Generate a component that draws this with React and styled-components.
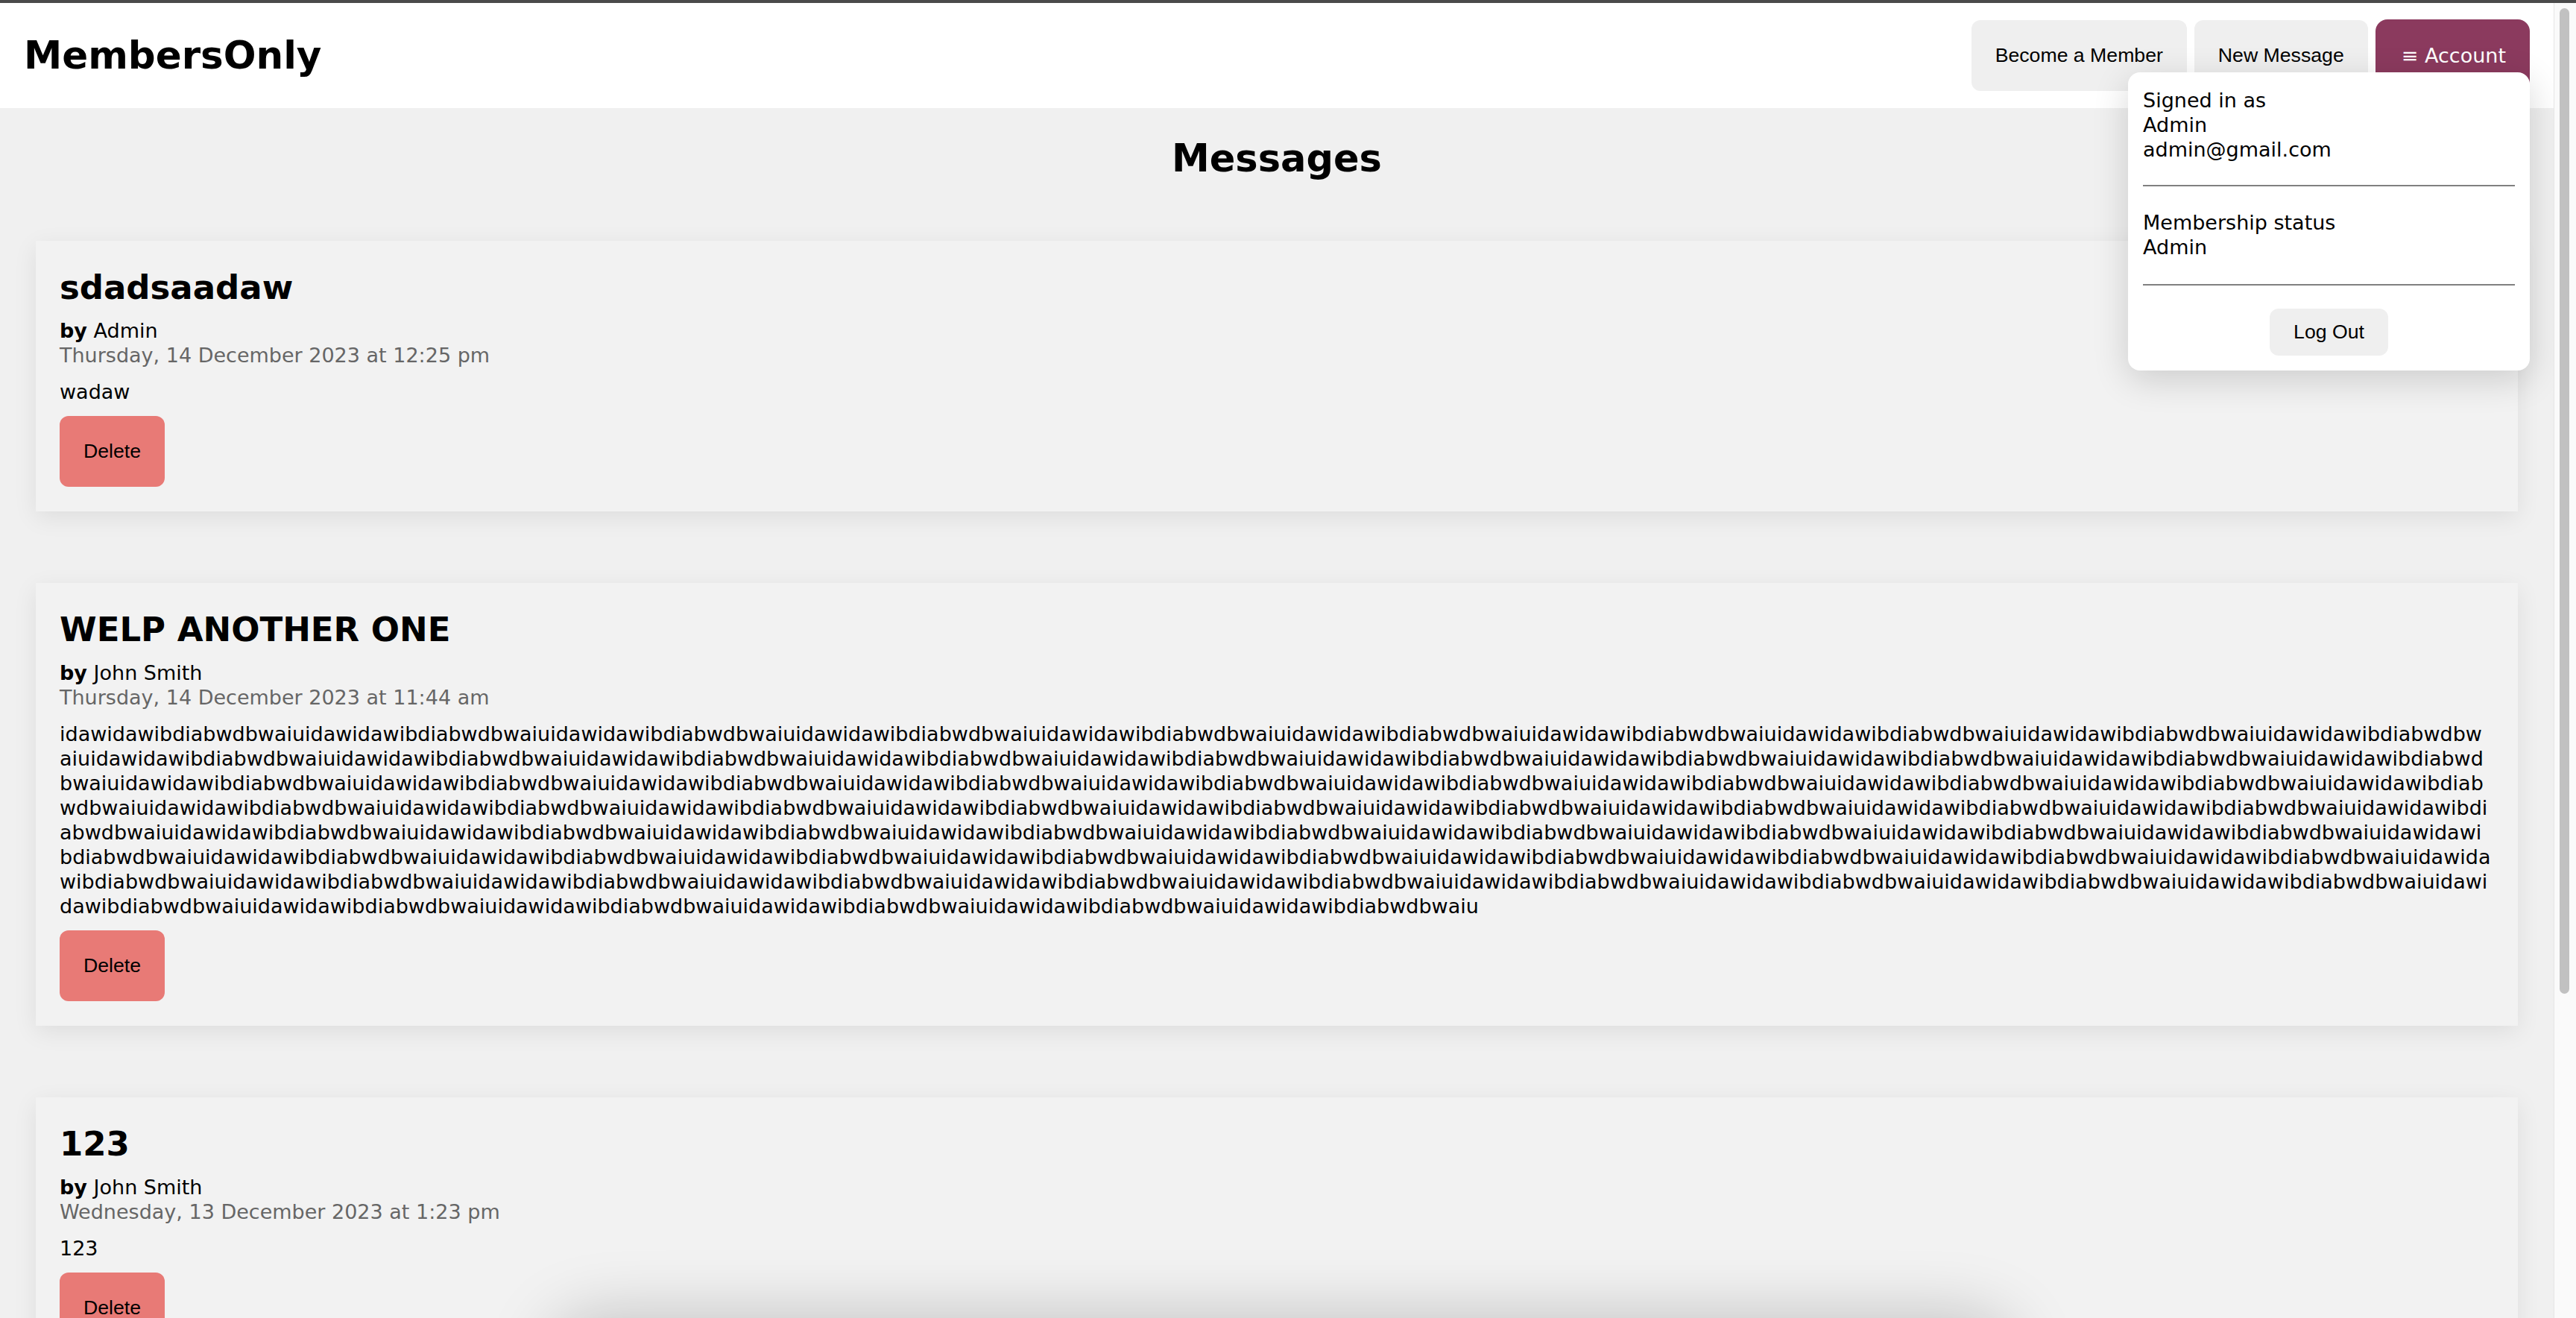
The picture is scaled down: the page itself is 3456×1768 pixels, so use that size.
import React from "react"
import styled, { createGlobalStyle } from "styled-components"

const GlobalStyle = createGlobalStyle`
  * {
    box-sizing: border-box;
  }
  html,
  body {
    margin: 0;
    height: 100%;
    overflow: hidden;
    background: #f0f0f0;
  }
  body {
    font-family: "DejaVu Sans", "Lucida Grande", sans-serif;
    font-size: 27px;
    line-height: 33px;
    color: #000;
  }
`

const Shell = styled.div`
  display: flex;
  height: 100vh;
  border-top: 4px solid #4a4a4a;
  background: #f0f0f0;
`

const Page = styled.div`
  flex: 1;
  min-width: 0;
  overflow-y: auto;
  scrollbar-width: none;
  &::-webkit-scrollbar {
    display: none;
  }
`

const ScrollTrack = styled.div`
  width: 30px;
  flex-shrink: 0;
  padding: 7px 9px 0 7px;
  background: #fafafa;
  border-left: 1px solid #e6e6e6;
`

const ScrollThumb = styled.div`
  height: 1322px;
  border-radius: 7px;
  background: #c1c1c1;
`

const Header = styled.header`
  display: flex;
  justify-content: space-between;
  align-items: center;
  height: 141px;
  padding: 0 32px;
  background: #fff;
`

const Logo = styled.div`
  font-size: 51.5px;
  font-weight: 700;
  line-height: 1;
`

const Nav = styled.nav`
  display: flex;
  align-items: center;
  gap: 10px;
`

const Button = styled.button`
  font-family: "Liberation Sans", Arial, sans-serif;
  font-size: 26.67px;
  line-height: normal;
  padding: 32px;
  border: none;
  border-radius: 12px;
  background: #efefef;
  color: #000;
  cursor: pointer;
`

const AccountWrap = styled.div`
  position: relative;
`

const AccountButton = styled.button`
  font-family: "DejaVu Sans", sans-serif;
  font-size: 27px;
  line-height: 33px;
  padding: 32px 32px 32px 35px;
  border: none;
  border-radius: 16px;
  background: #8b3a5e;
  color: #fff;
`

const Menu = styled.div`
  position: absolute;
  top: 71px;
  right: 0;
  width: 539px;
  padding: 21px 20px 20px;
  background: #fff;
  border-radius: 16px;
  box-shadow: 0 12px 48px rgba(0, 0, 0, 0.16);
  z-index: 10;
`

const MenuGroup = styled.div`
  margin-top: ${props => props.$top || 0}px;
`

const Rule = styled.hr`
  margin: ${props => props.$top}px 0 0;
  border: none;
  border-top: 2px solid #808080;
`

const MenuFooter = styled.div`
  display: flex;
  justify-content: center;
  margin-top: 31px;
`

const SmallButton = styled(Button)`
  padding: 16px 32px;
`

const Main = styled.main`
  padding: 38px 48px 495px;
`

const Heading = styled.h1`
  margin: 0 0 80px;
  text-align: center;
  font-size: 51px;
  line-height: 60px;
`

const List = styled.div`
  display: flex;
  flex-direction: column;
  gap: 96px;
`

const Card = styled.article`
  padding: 37px 32px 33px;
  background: #f2f2f2;
  box-shadow: 0 8px 30px rgba(0, 0, 0, 0.08);
`

const Title = styled.h2`
  margin: 0 0 15px;
  font-size: 45px;
  line-height: 52px;
`

const Author = styled.div``

const Stamp = styled.div`
  color: #666;
`

const Body = styled.p`
  margin: 16px 0;
  word-break: break-all;
`

const DeleteButton = styled(Button)`
  background: #e87a76;
`

const DockShadow = styled.div`
  position: fixed;
  top: 100vh;
  left: 740px;
  width: 1960px;
  height: 200px;
  border-radius: 60px;
  box-shadow: 0 0 90px 0 rgba(0, 0, 0, 0.22);
  pointer-events: none;
`

const messages = [
  {
    title: "sdadsaadaw",
    author: "Admin",
    date: "Thursday, 14 December 2023 at 12:25 pm",
    text: "wadaw",
  },
  {
    title: "WELP ANOTHER ONE",
    author: "John Smith",
    date: "Thursday, 14 December 2023 at 11:44 am",
    text: "idawidawibdiabwdbwaiu".repeat(75),
  },
  {
    title: "123",
    author: "John Smith",
    date: "Wednesday, 13 December 2023 at 1:23 pm",
    text: "123",
  },
]

const App = () => {
  return (
    <>
      <GlobalStyle />
      <Shell>
        <Page>
          <Header>
            <Logo>MembersOnly</Logo>
            <Nav>
              <Button>Become a Member</Button>
              <Button>New Message</Button>
              <AccountWrap>
                <AccountButton>≡ Account</AccountButton>
                <Menu>
                  <MenuGroup>
                    <div>Signed in as</div>
                    <div>Admin</div>
                    <div>admin@gmail.com</div>
                  </MenuGroup>
                  <Rule $top={31} />
                  <MenuGroup $top={32}>
                    <div>Membership status</div>
                    <div>Admin</div>
                  </MenuGroup>
                  <Rule $top={33} />
                  <MenuFooter>
                    <SmallButton>Log Out</SmallButton>
                  </MenuFooter>
                </Menu>
              </AccountWrap>
            </Nav>
          </Header>
          <Main>
            <Heading>Messages</Heading>
            <List>
              {messages.map(message => (
                <Card key={message.title}>
                  <Title>{message.title}</Title>
                  <Author>
                    <b>by</b> {message.author}
                  </Author>
                  <Stamp>{message.date}</Stamp>
                  <Body>{message.text}</Body>
                  <DeleteButton>Delete</DeleteButton>
                </Card>
              ))}
            </List>
          </Main>
        </Page>
        <ScrollTrack>
          <ScrollThumb />
        </ScrollTrack>
      </Shell>
      <DockShadow />
    </>
  )
}

export default App
